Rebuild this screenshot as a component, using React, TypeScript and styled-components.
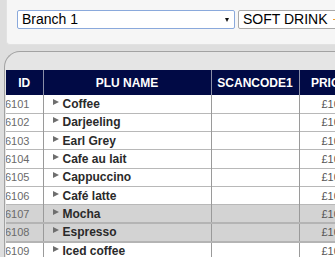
import styled, { createGlobalStyle } from "styled-components";

const GlobalStyle = createGlobalStyle`
  html, body {
    margin: 0;
    padding: 0;
    background: #dedede;
    font-family: "Liberation Sans", Arial, sans-serif;
    overflow: hidden;
  }
`;

const items = [
  { id: 6101, name: "Coffee" },
  { id: 6102, name: "Darjeeling" },
  { id: 6103, name: "Earl Grey" },
  { id: 6104, name: "Cafe au lait" },
  { id: 6105, name: "Cappuccino" },
  { id: 6106, name: "Café latte" },
  { id: 6107, name: "Mocha", marked: true },
  { id: 6108, name: "Espresso", marked: true },
  { id: 6109, name: "Iced coffee" },
  { id: 6110, name: "Iced tea" },
];

export default function App() {
  return (
    <>
      <GlobalStyle />
      <Page>
        <FilterBar>
          <Select $wide $focused>
            <span>Branch 1</span>
            <Caret />
          </Select>
          <Select>
            <span>SOFT DRINK</span>
            <OrangeCaret />
          </Select>
        </FilterBar>
        <GridPanel>
          <Table>
            <colgroup>
              <col style={{ width: 37 }} />
              <col style={{ width: 168 }} />
              <col style={{ width: 88 }} />
              <col style={{ width: 60 }} />
            </colgroup>
            <thead>
              <tr>
                <Th>ID</Th>
                <Th>PLU NAME</Th>
                <Th>SCANCODE1</Th>
                <Th>PRICE</Th>
              </tr>
            </thead>
            <tbody>
              {items.map((item) => (
                <Row key={item.id} $marked={item.marked}>
                  <IdCell>{item.id}</IdCell>
                  <NameCell>
                    <Arrow />
                    {item.name}
                  </NameCell>
                  <Td></Td>
                  <PriceCell>£10.00</PriceCell>
                </Row>
              ))}
            </tbody>
          </Table>
        </GridPanel>
      </Page>
    </>
  );
}

const Page = styled.div`
  width: 335px;
  height: 257px;
  overflow: hidden;
  display: flex;
  flex-direction: column;
`;

const FilterBar = styled.div`
  margin-left: 6px;
  height: 45px;
  box-sizing: border-box;
  background: #f6f6f6;
  border-left: 1px solid #e2e2e2;
  border-bottom: 1px solid #e2e2e2;
  border-bottom-left-radius: 4px;
  display: flex;
  align-items: flex-start;
  gap: 3px;
  padding: 10px 0 0 10px;
  white-space: nowrap;
`;

const Select = styled.div<{ $wide?: boolean; $focused?: boolean }>`
  position: relative;
  flex: none;
  width: ${({ $wide }) => ($wide ? "218px" : "120px")};
  height: 19px;
  box-sizing: border-box;
  background: #fff;
  border: 1px solid ${({ $focused }) => ($focused ? "#8aa9dc" : "#a9a9a9")};
  border-radius: 2px;
  font-size: 14px;
  line-height: 17px;
  color: #000;
  padding-left: 4px;
`;

const Caret = styled.span`
  position: absolute;
  right: 5px;
  top: 7px;
  width: 0;
  height: 0;
  border-left: 2.5px solid transparent;
  border-right: 2.5px solid transparent;
  border-top: 4px solid #111;
`;

const OrangeCaret = styled.span`
  position: absolute;
  left: 94px;
  top: 8px;
  width: 3px;
  height: 1px;
  background: #f0a030;
`;

const GridPanel = styled.div`
  margin: 6px 0 0 4px;
  flex: 1;
  background: #e5e5e5;
  border: 1px solid #a2a2a2;
  border-right: none;
  border-bottom: none;
  border-top-left-radius: 16px;
  padding: 18px 0 0 1px;
  overflow: hidden;
`;

const Table = styled.table`
  table-layout: fixed;
  border-collapse: collapse;
  width: 353px;
  font-family: "Liberation Sans", Arial, sans-serif;
`;

const Th = styled.th`
  height: 25px;
  padding: 0;
  background: #010a45;
  color: #fff;
  font-size: 12px;
  font-weight: bold;
  text-align: center;
  border-left: 1px solid #8a8fa8;
  &:first-child {
    border-left: none;
  }
`;

const Row = styled.tr<{ $marked?: boolean }>`
  height: 18.33px;
  background: ${({ $marked }) => ($marked ? "#d3d3d3" : "#fff")};
  border-bottom: ${({ $marked }) => ($marked ? "2px solid #b4b4b4" : "1px solid #b8b8b8")};
`;

const Td = styled.td`
  padding: 0;
  border-left: 1px solid #9a9a9a;
  white-space: nowrap;
  overflow: hidden;
`;

const IdCell = styled(Td)`
  border-left: none;
  font-size: 11px;
  color: #6a6a6a;
  text-indent: -1px;
`;

const NameCell = styled(Td)`
  font-size: 12px;
  font-weight: bold;
  color: #2a2a2a;
  padding-left: 9px;
`;

const Arrow = styled.span`
  display: inline-block;
  width: 0;
  height: 0;
  border-top: 3.5px solid transparent;
  border-bottom: 3.5px solid transparent;
  border-left: 6px solid #6e6e6e;
  margin-right: 4px;
  vertical-align: 3px;
`;

const PriceCell = styled(Td)`
  font-size: 11px;
  color: #555;
  text-align: left;
  padding-left: 22px;
`;
